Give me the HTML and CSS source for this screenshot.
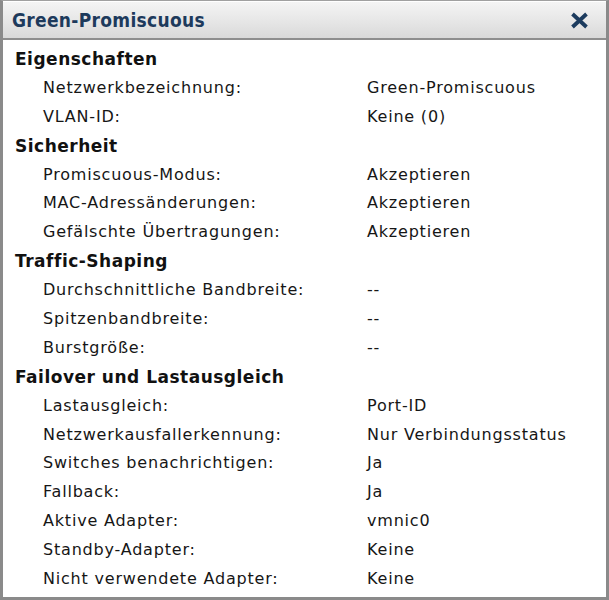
FILE: index.html
```html
<!DOCTYPE html>
<html lang="de">
<head>
<meta charset="utf-8">
<title>Green-Promiscuous</title>
<link rel="stylesheet" href="styles.css">
</head>
<body>
<div class="panel">
  <div class="titlebar">
    <span class="title">Green-Promiscuous</span>
    <span class="close" aria-label="Schließen">
      <svg width="19" height="17" viewBox="0 0 19 17"><path d="M2.5 2 L16.5 15 M16.5 2 L2.5 15" stroke="#1c3b5e" stroke-width="3.8" stroke-linecap="butt"/></svg>
    </span>
  </div>
  <div class="content">
    <div class="section">Eigenschaften</div>
    <div class="row"><span class="label">Netzwerkbezeichnung:</span><span class="value">Green-Promiscuous</span></div>
    <div class="row"><span class="label">VLAN-ID:</span><span class="value">Keine (0)</span></div>
    <div class="section">Sicherheit</div>
    <div class="row"><span class="label">Promiscuous-Modus:</span><span class="value">Akzeptieren</span></div>
    <div class="row"><span class="label">MAC-Adressänderungen:</span><span class="value">Akzeptieren</span></div>
    <div class="row"><span class="label">Gefälschte Übertragungen:</span><span class="value">Akzeptieren</span></div>
    <div class="section">Traffic-Shaping</div>
    <div class="row"><span class="label">Durchschnittliche Bandbreite:</span><span class="value">--</span></div>
    <div class="row"><span class="label">Spitzenbandbreite:</span><span class="value">--</span></div>
    <div class="row"><span class="label">Burstgröße:</span><span class="value">--</span></div>
    <div class="section">Failover und Lastausgleich</div>
    <div class="row"><span class="label">Lastausgleich:</span><span class="value">Port-ID</span></div>
    <div class="row"><span class="label">Netzwerkausfallerkennung:</span><span class="value">Nur Verbindungsstatus</span></div>
    <div class="row"><span class="label">Switches benachrichtigen:</span><span class="value">Ja</span></div>
    <div class="row"><span class="label">Fallback:</span><span class="value">Ja</span></div>
    <div class="row"><span class="label">Aktive Adapter:</span><span class="value">vmnic0</span></div>
    <div class="row"><span class="label">Standby-Adapter:</span><span class="value">Keine</span></div>
    <div class="row"><span class="label">Nicht verwendete Adapter:</span><span class="value">Keine</span></div>
  </div>
</div>
</body>
</html>
```
FILE: styles.css
```css
html, body {
  margin: 0;
  padding: 0;
  background: #ffffff;
}
.panel {
  width: 609px;
  height: 600px;
  box-sizing: border-box;
  border: 3px solid #8a8a8a;
  border-top: 1px solid #a0a0a0;
  background: #ffffff;
  display: flex;
  flex-direction: column;
  font-family: "DejaVu Sans", Verdana, sans-serif;
  color: #161616;
}
.titlebar {
  height: 36px;
  flex: none;
  display: flex;
  align-items: center;
  justify-content: space-between;
  padding: 0 17px 0 9px;
  background: linear-gradient(to bottom, #f4f4f4 0%, #e6e6e6 55%, #d9d9d9 100%);
  border-bottom: 2px solid #8e8e8e;
  border-top: 1px solid #ffffff;
}
.title {
  font-family: "DejaVu Sans Condensed", "DejaVu Sans", sans-serif;
  font-weight: bold;
  font-size: 19px;
  color: #1d3a5c;
  letter-spacing: 0.3px;
}
.close {
  display: flex;
  width: 19px;
  height: 17px;
}
.content {
  padding: 5px 0 0 12px;
  display: flex;
  flex-direction: column;
}
.section {
  height: 28.9px;
  line-height: 28.9px;
  font-weight: bold;
  font-size: 17px;
  letter-spacing: 0.5px;
  color: #111111;
}
.row {
  height: 28.9px;
  line-height: 28.9px;
  display: grid;
  grid-template-columns: 324px 1fr;
  padding-left: 28px;
  font-size: 16px;
  letter-spacing: 0.8px;
}
```
